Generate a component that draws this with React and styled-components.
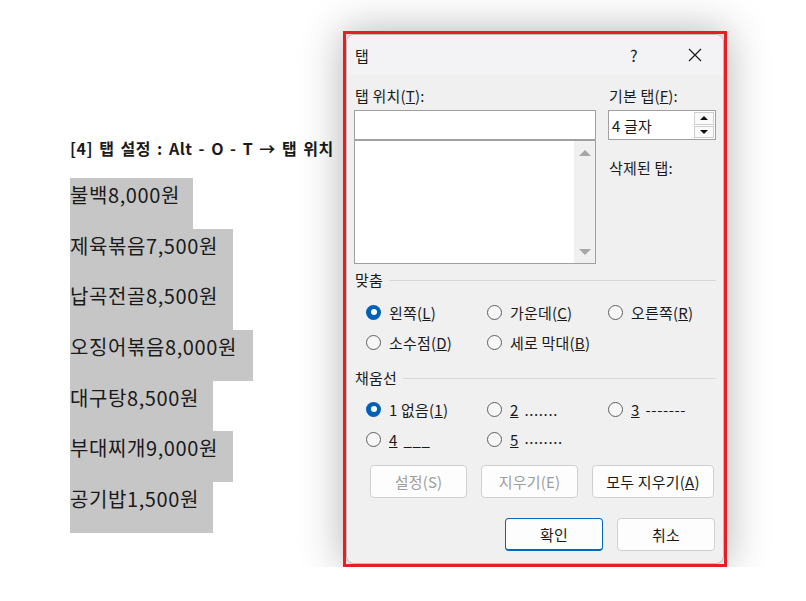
import React from 'react';
import styled, { createGlobalStyle, css } from 'styled-components';

const GlobalStyle = createGlobalStyle`
  html, body { margin: 0; padding: 0; background: #fff; }
  body { font-family: "Noto Sans CJK KR", "Noto Sans", sans-serif; color: #1a1a1a; }
`;

const UI_FONT = `"Noto Sans CJK KR", "Noto Sans", sans-serif`;

const Page = styled.div`
  align-items: flex-start;
  display: flex;
  padding: 31px 0 0 70px;
`;

const Document = styled.div`
  display: flex;
  flex-direction: column;
  padding-top: 107px;
  width: 273px;
`;

const DocTitle = styled.div`
  font-family: ${UI_FONT};
  font-size: 16px;
  font-weight: 700;
  height: 20px;
  letter-spacing: 0.5px;
  line-height: 20px;
  margin-bottom: 20px;
  white-space: nowrap;
  word-spacing: 2px;
`;

const MenuRow = styled.div`
  background: #c6c6c6;
  box-sizing: border-box;
  font-family: ${UI_FONT};
  font-size: 20px;
  height: 50.7px;
  letter-spacing: 0.6px;
  line-height: 28px;
  padding-top: 3px;
  white-space: nowrap;
  width: ${({ $w }) => $w}px;
`;

const Frame = styled.div`
  background: #e2e2e2;
  border: 3px solid #e81e25;
  box-shadow: 0 0 40px rgba(0, 0, 0, 0.3);
  box-sizing: border-box;
  flex: none;
  height: 536px;
  width: 384px;
`;

const Dialog = styled.div`
  background: #f0f0f0;
  border: 1px solid #bdbdbd;
  border-radius: 8px;
  box-sizing: border-box;
  display: flex;
  flex-direction: column;
  font-family: ${UI_FONT};
  font-size: 15px;
  height: 100%;
  letter-spacing: 0.2px;
  overflow: hidden;
`;

const TitleBar = styled.div`
  align-items: center;
  background: #f3f3f5;
  display: flex;
  flex: none;
  height: 40px;
  padding-left: 8px;
`;

const TitleText = styled.div`
  flex: 1;
  font-size: 15px;
`;

const CaptionButton = styled.div`
  align-items: center;
  display: flex;
  font-size: 16px;
  height: 40px;
  justify-content: center;
  width: ${({ $w }) => $w}px;
`;

const Body = styled.div`
  display: flex;
  flex-direction: column;
  padding: 11px 7px 0 7px;
`;

const TopGrid = styled.div`
  column-gap: 12px;
  display: grid;
  grid-template-columns: 242px 108px;
`;

const Column = styled.div`
  display: flex;
  flex-direction: column;
`;

const Label = styled.div`
  height: 20px;
  line-height: 20px;
  margin-bottom: ${({ $mb }) => $mb ?? 4}px;
  margin-top: ${({ $mt }) => $mt ?? 0}px;
  padding-left: 1px;
  white-space: nowrap;
`;

const TextBox = styled.div`
  background: #fff;
  border: 1px solid #a0a0a0;
  box-sizing: border-box;
  height: 30px;
`;

const ListBox = styled.div`
  background: #fff;
  border: 1px solid #a0a0a0;
  box-sizing: border-box;
  display: flex;
  height: 124px;
  justify-content: flex-end;
`;

const ScrollBar = styled.div`
  align-items: center;
  background: #f0f0f0;
  display: flex;
  flex-direction: column;
  justify-content: space-between;
  padding: 9px 0 8px;
  width: 21px;
`;

const Arrow = styled.div`
  border-left: ${({ $s }) => $s}px solid transparent;
  border-right: ${({ $s }) => $s}px solid transparent;
  height: 0;
  width: 0;
  ${({ $down, $c, $h }) => ($down
    ? css`border-top: ${$h}px solid ${$c};`
    : css`border-bottom: ${$h}px solid ${$c};`)}
`;

const SpinBox = styled.div`
  align-items: center;
  background: #fff;
  border: 1px solid #a0a0a0;
  box-sizing: border-box;
  display: flex;
  height: 30px;
  padding: 1px 1px 1px 3px;
`;

const SpinValue = styled.div`
  flex: 1;
`;

const SpinButtons = styled.div`
  display: flex;
  flex-direction: column;
  gap: 1px;
  height: 100%;
  width: 20px;
`;

const SpinButton = styled.div`
  align-items: center;
  background: #fafafa;
  border: 1px solid #cfcfcf;
  box-sizing: border-box;
  display: flex;
  flex: 1;
  justify-content: center;
`;

const SectionHeader = styled.div`
  align-items: center;
  display: flex;
  height: 20px;
  line-height: 20px;
  margin-top: ${({ $mt }) => $mt}px;
  padding-left: 1px;
  &::after {
    background: #d8d8d8;
    content: '';
    flex: 1;
    height: 1px;
    margin-left: 6px;
  }
`;

const RadioGrid = styled.div`
  display: grid;
  grid-auto-rows: 30px;
  grid-template-columns: repeat(3, 121px);
  margin-top: ${({ $mt }) => $mt}px;
  padding-left: 12px;
`;

const RadioItem = styled.label`
  align-items: center;
  display: flex;
  gap: 8px;
  white-space: nowrap;
`;

const RadioCircle = styled.span`
  border-radius: 50%;
  box-sizing: border-box;
  flex: none;
  height: 15px;
  width: 15px;
  ${({ $on }) => ($on
    ? css`
      background: #0060b9;
      position: relative;
      &::after {
        background: #fff;
        border-radius: 50%;
        content: '';
        height: 6px;
        left: 4.5px;
        position: absolute;
        top: 4.5px;
        width: 6px;
      }
    `
    : css`
      background: #f7f7f7;
      border: 1px solid #5f5f5f;
    `)}
`;

const Leader = styled.span`
  letter-spacing: 0.6px;
  margin-left: 6px;
  ${({ $mid }) => $mid && css`position: relative; top: -2px;`}
`;

const ButtonRow = styled.div`
  display: flex;
  gap: ${({ $gap }) => $gap}px;
  justify-content: ${({ $end }) => ($end ? 'flex-end' : 'flex-start')};
  margin-top: ${({ $mt }) => $mt}px;
  padding: ${({ $end }) => ($end ? '0 1px 0 0' : '0 0 0 16px')};
`;

const Button = styled.div`
  align-items: center;
  background: #fdfdfd;
  border: 1px solid ${({ $primary }) => ($primary ? '#0067c0' : '#d0d0d0')};
  border-radius: 4px;
  box-sizing: border-box;
  color: ${({ $disabled }) => ($disabled ? '#9d9d9d' : '#1a1a1a')};
  display: flex;
  height: 33px;
  justify-content: center;
  width: ${({ $w }) => $w}px;
  ${({ $primary }) => $primary && css`border-bottom-width: 2px;`}
`;

const menu = [
  ['불백8,000원', 123],
  ['제육볶음7,500원', 163],
  ['납곡전골8,500원', 163],
  ['오징어볶음8,000원', 183],
  ['대구탕8,500원', 143],
  ['부대찌개9,000원', 163],
  ['공기밥1,500원', 143],
];

const CloseIcon = () => (
  <svg width="14" height="14" viewBox="0 0 14 14">
    <path d="M1 1L13 13M13 1L1 13" stroke="#1a1a1a" strokeWidth="1.2" />
  </svg>
);

const Radio = ({ on, children }) => (
  <RadioItem>
    <RadioCircle $on={on} />
    <span>{children}</span>
  </RadioItem>
);

const App = () => (
  <React.Fragment>
    <GlobalStyle />
    <Page>
      <Document>
        <DocTitle>[4] 탭 설정 : Alt - O - T → 탭 위치</DocTitle>
        {menu.map(([text, w]) => (
          <MenuRow key={text} $w={w}>{text}</MenuRow>
        ))}
      </Document>

      <Frame>
        <Dialog>
          <TitleBar>
            <TitleText>탭</TitleText>
            <CaptionButton $w={46}>?</CaptionButton>
            <CaptionButton $w={10} />
            <CaptionButton $w={56}><CloseIcon /></CaptionButton>
          </TitleBar>

          <Body>
            <TopGrid>
              <Column>
                <Label>탭 위치(<u>T</u>):</Label>
                <TextBox />
                <ListBox>
                  <ScrollBar>
                    <Arrow $s={6} $h={6} $c="#a6a6a6" />
                    <Arrow $s={6} $h={6} $c="#a6a6a6" $down />
                  </ScrollBar>
                </ListBox>
              </Column>
              <Column>
                <Label>기본 탭(<u>F</u>):</Label>
                <SpinBox>
                  <SpinValue>4 글자</SpinValue>
                  <SpinButtons>
                    <SpinButton><Arrow $s={4} $h={4} $c="#111" /></SpinButton>
                    <SpinButton><Arrow $s={4} $h={4} $c="#111" $down /></SpinButton>
                  </SpinButtons>
                </SpinBox>
                <Label $mt={18}>삭제된 탭:</Label>
              </Column>
            </TopGrid>

            <SectionHeader $mt={6}>맞춤</SectionHeader>
            <RadioGrid $mt={7}>
              <Radio on>왼쪽(<u>L</u>)</Radio>
              <Radio>가운데(<u>C</u>)</Radio>
              <Radio>오른쪽(<u>R</u>)</Radio>
              <Radio>소수점(<u>D</u>)</Radio>
              <Radio>세로 막대(<u>B</u>)</Radio>
            </RadioGrid>

            <SectionHeader $mt={11}>채움선</SectionHeader>
            <RadioGrid $mt={6}>
              <Radio on>1 없음(<u>1</u>)</Radio>
              <Radio><u>2</u><Leader>.......</Leader></Radio>
              <Radio><u>3</u><Leader>-------</Leader></Radio>
              <Radio><u>4</u><Leader>___</Leader></Radio>
              <Radio><u>5</u><Leader $mid>........</Leader></Radio>
            </RadioGrid>

            <ButtonRow $mt={11} $gap={14}>
              <Button $w={97} $disabled>설정(S)</Button>
              <Button $w={97} $disabled>지우기(E)</Button>
              <Button $w={122}>모두 지우기(<u>A</u>)</Button>
            </ButtonRow>

            <ButtonRow $mt={20} $gap={14} $end>
              <Button $w={98} $primary>확인</Button>
              <Button $w={98}>취소</Button>
            </ButtonRow>
          </Body>
        </Dialog>
      </Frame>
    </Page>
  </React.Fragment>
);

export default App;
